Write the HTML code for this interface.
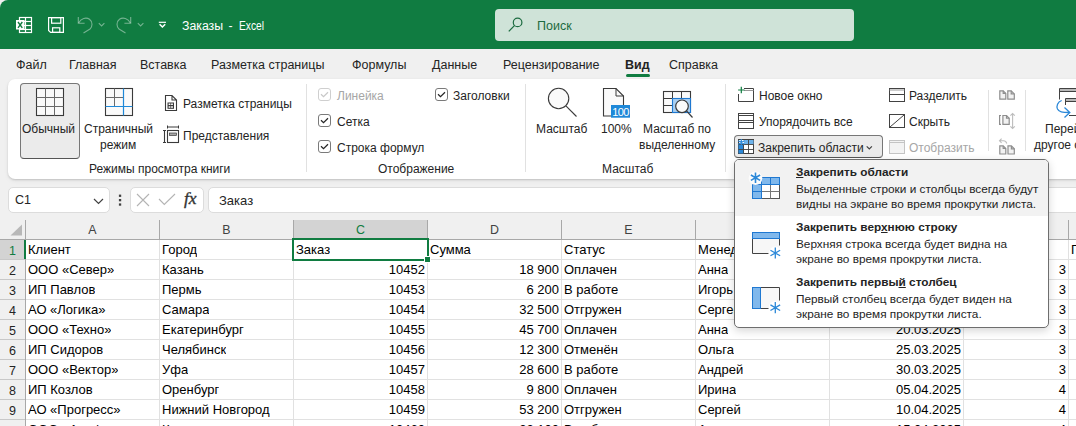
<!DOCTYPE html><html><head><meta charset="utf-8"><style>
*{margin:0;padding:0;box-sizing:border-box}
html,body{width:1076px;height:426px;overflow:hidden;background:#f0f0f0;font-family:"Liberation Sans",sans-serif;color:#242424}
.a{position:absolute;white-space:nowrap}
svg{position:absolute;overflow:visible}
.tab{position:absolute;top:57px;font-size:12.5px;line-height:16px;color:#242424}
.rt{position:absolute;white-space:nowrap;font-size:12px;line-height:15px;color:#242424;margin-top:1px}
.sep{position:absolute;width:1px;background:#e1e1e1}
.cb{position:absolute;width:13px;height:13px;border:1px solid #7a7a7a;border-radius:3px;background:#fff}
.cell{position:absolute;white-space:nowrap;font-size:13px;line-height:19px;padding-top:0.4px;height:19px;color:#000;overflow:hidden}
.num{text-align:right}
.dd{position:absolute;white-space:nowrap;font-size:11.8px;line-height:15px;color:#242424}
</style></head><body>
<div class="a" style="left:0;top:0;width:1076px;height:49px;background:#107c41;border-top-left-radius:8px"></div>
<svg style="left:0;top:0" width="200" height="48">
<rect x="19.5" y="17.5" width="12" height="15" fill="none" stroke="#fff" stroke-width="1.2"/>
<line x1="25.5" y1="17.5" x2="25.5" y2="32.5" stroke="#fff" stroke-width="1.2"/>
<line x1="19.5" y1="21.5" x2="31.5" y2="21.5" stroke="#fff" stroke-width="1.2"/>
<line x1="19.5" y1="25.5" x2="31.5" y2="25.5" stroke="#fff" stroke-width="1.2"/>
<line x1="19.5" y1="29.5" x2="31.5" y2="29.5" stroke="#fff" stroke-width="1.2"/>
<rect x="16" y="20" width="8.5" height="9.5" fill="#fff"/>
<path d="M18 22 L22.3 27.8 M22.3 22 L18 27.8" stroke="#107c41" stroke-width="1.4"/>
<path d="M48.6 17.6 H63.4 V32.4 H50.6 L48.6 30.4 Z" fill="none" stroke="#fff" stroke-width="1.2"/>
<rect x="51.6" y="17.6" width="9.2" height="5.6" fill="none" stroke="#fff" stroke-width="1.2"/>
<rect x="52.6" y="27.8" width="7.2" height="4.6" fill="none" stroke="#fff" stroke-width="1.2"/>
<g stroke="rgba(255,255,255,0.42)" stroke-width="1.1" fill="none">
<path d="M78.3 17 V23.3 H84.6"/>
<path d="M78.6 23 C81 18.5 86 16.8 89.5 19.3 C93 22 92.5 26.5 90 29 L83.5 33"/>
<path d="M98.8 23.2 L101.6 26 L104.4 23.2"/>
<path d="M130.7 17 V23.3 H124.4"/>
<path d="M130.4 23 C128 18.5 123 16.8 119.5 19.3 C116 22 116.5 26.5 119 29 L125.5 33"/>
<path d="M137.8 23.2 L140.6 26 L143.4 23.2"/>
</g>
<line x1="158.8" y1="22.3" x2="166" y2="22.3" stroke="#fff" stroke-width="1.2"/>
<path d="M159.6 24.2 L162.4 27 L165.2 24.2" stroke="#fff" stroke-width="1.5" fill="none"/>
</svg>
<div class="a" style="left:182px;top:18px;font-size:12.3px;line-height:16px;color:#fff">Заказы</div>
<div class="a" style="left:228.5px;top:18px;font-size:12.3px;line-height:16px;color:#fff">-</div>
<div class="a" style="left:239px;top:18px;font-size:12.3px;line-height:16px;color:#fff;transform:scaleX(0.83);transform-origin:0 0">Excel</div>
<div class="a" style="left:495px;top:9px;width:359px;height:32px;background:#cfe3d8;border-radius:4px"></div>
<svg style="left:0;top:0" width="600" height="48">
<circle cx="517.6" cy="22.4" r="4.3" fill="none" stroke="#1c6b40" stroke-width="1.2"/>
<line x1="514.4" y1="25.6" x2="508.8" y2="31.4" stroke="#1c6b40" stroke-width="1.3"/>
</svg>
<div class="a" style="left:537px;top:18px;font-size:12.5px;line-height:16px;color:#1c6b40">Поиск</div>
<div class="tab" style="left:16px">Файл</div>
<div class="tab" style="left:69px">Главная</div>
<div class="tab" style="left:140px">Вставка</div>
<div class="tab" style="left:211px">Разметка страницы</div>
<div class="tab" style="left:352px">Формулы</div>
<div class="tab" style="left:432px">Данные</div>
<div class="tab" style="left:503px">Рецензирование</div>
<div class="tab" style="left:669px">Справка</div>
<div class="tab" style="left:625px;font-weight:bold">Вид</div>
<div class="a" style="left:626px;top:74px;width:24px;height:3px;background:#107c41;border-radius:1.5px"></div>
<div class="a" style="left:8px;top:79px;width:1090px;height:100px;background:#fff;border-radius:7px;box-shadow:0 1px 2px rgba(0,0,0,0.16),0 2px 5px rgba(0,0,0,0.05)"></div>
<div class="a" style="left:20px;top:83px;width:60px;height:76px;background:#ebebeb;border:1px solid #777;border-bottom-color:#555;border-radius:4px"></div>
<svg style="left:0;top:0" width="320" height="180">
<rect x="36.5" y="88.5" width="27" height="27" fill="#fafafa" stroke="#3a3a3a" stroke-width="1.1"/>
<path d="M45.5 88.5 V115.5 M54.5 88.5 V115.5 M36.5 97.5 H63.5 M36.5 106.5 H63.5" stroke="#6a6a6a" stroke-width="1"/>
<rect x="105.5" y="88.5" width="27" height="27" fill="#fafafa" stroke="#3a3a3a" stroke-width="1.1"/>
<path d="M114.5 88.5 V106.5 M105.5 97.5 H123.5" stroke="#6a6a6a" stroke-width="1"/>
<path d="M123.5 88.5 V115.5 M105.5 106.5 H132.5" stroke="#1e88d8" stroke-width="1.2"/>
<path d="M165.5 95.5 H172 L176.5 100 V110.5 H165.5 Z M172 95.5 V100 H176.5" fill="#fff" stroke="#3a3a3a" stroke-width="1.1"/>
<rect x="167.5" y="102.5" width="6.5" height="6.3" fill="#3a3a3a"/>
<path d="M168.6 103.6 H170.4 V105.1 H168.6 Z M171.1 103.6 H172.9 V105.1 H171.1 Z M168.6 106.2 H170.4 V107.7 H168.6 Z M171.1 106.2 H172.9 V107.7 H171.1 Z" fill="#fff"/>
<path d="M164.5 130.5 V142.5 M163 130.5 H166 M163 142.5 H166" stroke="#3a3a3a" stroke-width="1.1"/>
<path d="M167.5 127 H178.5 M167.5 125.5 V128.5 M178.5 125.5 V128.5" stroke="#3a3a3a" stroke-width="1"/>
<rect x="167.5" y="130.5" width="11" height="12" fill="#fff" stroke="#3a3a3a" stroke-width="1.1"/>
<rect x="169.5" y="133" width="7" height="2.5" fill="#a8a8a8" stroke="#3a3a3a" stroke-width="0.7"/>
</svg>
<div class="rt" style="left:22px;top:121px">Обычный</div>
<div class="rt" style="left:84px;top:121px">Страничный</div>
<div class="rt" style="left:100px;top:137px">режим</div>
<div class="rt" style="left:183px;top:96px">Разметка страницы</div>
<div class="rt" style="left:183px;top:128px">Представления</div>
<div class="rt" style="left:89px;top:161px">Режимы просмотра книги</div>
<div class="sep" style="left:306px;top:84px;height:88px"></div>
<div class="cb" style="left:318px;top:88px;border-color:#cfcfcf"></div>
<svg style="left:318px;top:88px" width="13" height="13"><path d="M3 6.3 L5.5 8.6 L10 4.2" fill="none" stroke="#c8c8c8" stroke-width="1.25"/></svg>
<div class="cb" style="left:318px;top:114px;border-color:#7a7a7a"></div>
<svg style="left:318px;top:114px" width="13" height="13"><path d="M3 6.3 L5.5 8.6 L10 4.2" fill="none" stroke="#242424" stroke-width="1.25"/></svg>
<div class="cb" style="left:318px;top:140px;border-color:#7a7a7a"></div>
<svg style="left:318px;top:140px" width="13" height="13"><path d="M3 6.3 L5.5 8.6 L10 4.2" fill="none" stroke="#242424" stroke-width="1.25"/></svg>
<div class="cb" style="left:435px;top:88px;border-color:#7a7a7a"></div>
<svg style="left:435px;top:88px" width="13" height="13"><path d="M3 6.3 L5.5 8.6 L10 4.2" fill="none" stroke="#242424" stroke-width="1.25"/></svg>
<div class="rt" style="left:337px;top:88px;color:#a6a6a6">Линейка</div>
<div class="rt" style="left:337px;top:114px">Сетка</div>
<div class="rt" style="left:337px;top:140px">Строка формул</div>
<div class="rt" style="left:453px;top:88px">Заголовки</div>
<div class="rt" style="left:378px;top:161px">Отображение</div>
<div class="sep" style="left:525px;top:84px;height:88px"></div>
<svg style="left:0;top:0" width="740" height="180">
<circle cx="558.6" cy="98.5" r="10.2" fill="#fafafa" stroke="#3a3a3a" stroke-width="1.1"/>
<line x1="565.9" y1="105.8" x2="576.5" y2="116.5" stroke="#3a3a3a" stroke-width="1.1"/>
<path d="M603.5 88.5 H616 L623.5 96 V116 H603.5 Z" fill="#fafafa" stroke="#3a3a3a" stroke-width="1.1"/>
<path d="M616 88.5 V96 H623.5" fill="none" stroke="#3a3a3a" stroke-width="1"/>
<rect x="611" y="105" width="19" height="12.7" fill="#1e88d8"/>
<text x="620.5" y="115.8" font-family="Liberation Sans" font-size="11" fill="#fff" text-anchor="middle" letter-spacing="-0.7">100</text>
<rect x="663.5" y="91.5" width="27" height="21" fill="#fafafa" stroke="#3a3a3a" stroke-width="1.1"/>
<path d="M672.5 91.5 V112.5 M681.5 91.5 V98.5 M663.5 98.5 H690.5 M663.5 105.5 H672.5" stroke="#3a3a3a" stroke-width="1"/>
<rect x="672.5" y="98.5" width="18" height="14" fill="#a9cff2" stroke="#1e78d1" stroke-width="1.1"/>
<circle cx="682" cy="106.3" r="6.3" fill="#fafafa" stroke="#3a3a3a" stroke-width="1.2"/>
<line x1="686.5" y1="110.8" x2="692.5" y2="117.5" stroke="#3a3a3a" stroke-width="1.2"/>
</svg>
<div class="rt" style="left:536px;top:121px">Масштаб</div>
<div class="rt" style="left:601px;top:121px">100%</div>
<div class="rt" style="left:643px;top:121px">Масштаб по</div>
<div class="rt" style="left:639px;top:137px">выделенному</div>
<div class="rt" style="left:602px;top:161px">Масштаб</div>
<div class="sep" style="left:725px;top:84px;height:88px"></div>
<div class="a" style="left:734px;top:135px;width:149px;height:23px;background:#ebebeb;border:1px solid #777;border-bottom-color:#555;border-radius:4px"></div>
<svg style="left:0;top:0" width="1076" height="180">
<path d="M744 88.5 H753.5 V101.5 H738.5 V94" fill="none" stroke="#424242" stroke-width="1"/>
<path d="M744 90.5 H753.5" stroke="#9a9a9a" stroke-width="1"/>
<path d="M741.3 86.8 V93.2 M738.1 90 H744.5" stroke="#107c41" stroke-width="1.2"/>
<rect x="738.5" y="113.5" width="15" height="15" fill="none" stroke="#424242" stroke-width="1"/>
<path d="M738.5 115.5 H753.5 M738.5 120.5 H753.5 M738.5 122.5 H753.5" stroke="#424242" stroke-width="1"/>
<rect x="738.5" y="139.5" width="15" height="14" fill="#fff" stroke="#424242" stroke-width="1"/>
<rect x="744" y="140" width="9.5" height="4.5" fill="#6cb2eb"/>
<rect x="738.5" y="144.5" width="5.5" height="9" fill="#2b88d8"/>
<path d="M743.5 144.5 V153.5 M748.5 140 V153.5 M738.5 144.5 H753.5 M738.5 149.5 H753.5" stroke="#424242" stroke-width="0.9"/>
<path d="M741.3 139 V146 M738.2 140.8 L744.4 144.2 M738.2 144.2 L744.4 140.8" stroke="#2b88d8" stroke-width="1.2"/>
<path d="M866.7 146.3 L869.3 148.9 L871.9 146.3" fill="none" stroke="#424242" stroke-width="1.2"/>
<rect x="889.5" y="88.5" width="15" height="13" fill="none" stroke="#424242" stroke-width="1"/>
<path d="M889.5 90 H904.5" stroke="#9a9a9a" stroke-width="1"/>
<path d="M889.5 94.5 H904.5" stroke="#424242" stroke-width="1"/>
<rect x="889.5" y="114.5" width="15" height="13" fill="none" stroke="#424242" stroke-width="1"/>
<path d="M890 127 L904 115" stroke="#424242" stroke-width="1"/>
<rect x="889.5" y="140.5" width="15" height="13" fill="#f3f3f3" stroke="#c4c4c4" stroke-width="1"/>
<path d="M889.5 142.5 H904.5" stroke="#c4c4c4" stroke-width="1"/>
<g stroke="#8e8e8e" stroke-width="1.2" fill="#f2f2f2" stroke-linejoin="miter">
<path d="M999.8 90.8 H1003.2 L1005.8 93.4 V99.2 H999.8 Z M1007.8 90.8 H1011.2 L1014.3 93.9 V99.2 H1007.8 Z"/>
<path d="M1003.2 90.8 V93.4 H1005.8 M1011.2 90.8 V93.9 H1014.3" fill="none"/>
<path d="M1002.9 115.5 H1006.5 L1009.2 118.2 V124.3 H1002.9 Z"/>
<path d="M1006.5 115.5 V118.2 H1009.2 M1001 115.5 H999.6 V124.3 H1001" fill="none"/>
<path d="M999.8 145.9 H1003.2 L1005.8 148.5 V154 H999.8 Z M1008 145.9 H1011.4 L1014.3 148.8 V154 H1008 Z"/>
<path d="M1003.2 145.9 V148.5 H1005.8 M1011.4 145.9 V148.8 H1014.3" fill="none"/>
</g>
<g stroke="#bdbdbd" stroke-width="1.1" fill="none">
<path d="M1012.6 113.5 V128.5 M1010.4 115.7 L1012.6 113.5 L1014.8 115.7 M1010.4 126.3 L1012.6 128.5 L1014.8 126.3"/>
<path d="M999.5 140.8 H1003.5 C1005 140.8 1006.3 141.8 1006.8 143.5 M1001.6 138.7 L999.5 140.8 L1001.6 142.9"/>
</g>
<path d="M1059.5 99.5 V88.5 H1080" fill="none" stroke="#424242" stroke-width="1"/>
<rect x="1060" y="89" width="20" height="2.5" fill="#b8b8b8"/>
<path d="M1059.5 91.5 H1080" stroke="#424242" stroke-width="1"/>
<path d="M1065.5 105 V98.5 H1080" fill="none" stroke="#424242" stroke-width="1"/>
<rect x="1066" y="99" width="14" height="2.5" fill="#b8b8b8"/>
<path d="M1065.5 101.5 H1080 M1069 115.5 H1080" stroke="#424242" stroke-width="1"/>
<path d="M1061.7 100.5 C1057.5 102 1056.2 106 1057.5 109 C1059 112 1062 112.5 1069.5 112.5 M1064.5 107.5 L1069.8 112.5 L1064.5 117.5" fill="none" stroke="#2b88d8" stroke-width="1.3"/>
</svg>
<div class="rt" style="left:759px;top:88px">Новое окно</div>
<div class="rt" style="left:759px;top:114px">Упорядочить все</div>
<div class="rt" style="left:758px;top:140px">Закрепить области</div>
<div class="rt" style="left:909px;top:88px">Разделить</div>
<div class="rt" style="left:909px;top:114px">Скрыть</div>
<div class="rt" style="left:909px;top:140px;color:#a6a6a6">Отобразить</div>
<div class="sep" style="left:988px;top:90px;height:61px"></div>
<div class="sep" style="left:1025px;top:90px;height:61px"></div>
<div class="rt" style="left:1045px;top:121px">Перейти в</div>
<div class="rt" style="left:1034px;top:137px">другое окно</div>
<div class="a" style="left:8px;top:187px;width:102px;height:26px;background:#fff;border:1px solid #dcdcdc;border-radius:5px"></div>
<div class="a" style="left:15px;top:193px;font-size:12.5px;line-height:15px;color:#242424">C1</div>
<svg style="left:0;top:0" width="220" height="220">
<path d="M94 199 L98.5 203.5 L103 199" fill="none" stroke="#424242" stroke-width="1.2"/>
<rect x="118.9" y="194.6" width="2.3" height="2.3" fill="#424242"/><rect x="118.9" y="199" width="2.3" height="2.3" fill="#424242"/><rect x="118.9" y="203.4" width="2.3" height="2.3" fill="#424242"/>
</svg>
<div class="a" style="left:130px;top:187px;width:74px;height:26px;background:#fff;border:1px solid #dcdcdc;border-radius:5px"></div>
<svg style="left:0;top:0" width="220" height="220"><path d="M137 194 L149 206 M149 194 L137 206" stroke="#b4b4b4" stroke-width="1.1"/><path d="M159 199 L164.3 204.4 L175 194" fill="none" stroke="#b4b4b4" stroke-width="1.1"/></svg>
<div class="a" style="left:184px;top:188px;font-family:'Liberation Serif',serif;font-style:italic;font-size:17.5px;line-height:20px;color:#333;-webkit-text-stroke:0.35px #333">fx</div>
<div class="a" style="left:208px;top:187px;width:900px;height:26px;background:#fff;border:1px solid #dcdcdc;border-radius:5px"></div>
<div class="a" style="left:219px;top:193px;font-size:13px;line-height:15px;color:#242424">Заказ</div>
<div class="a" style="left:26px;top:240px;width:1050px;height:186px;background:#fff"></div>
<div class="a" style="left:293px;top:220px;width:135px;height:19px;background:#d3d3d3"></div>
<div class="a" style="left:0;top:240px;width:24px;height:19px;background:#d3d3d3"></div>
<div class="a" style="left:24px;top:240px;width:2px;height:19px;background:#107c41"></div>
<svg style="left:0;top:0" width="1076" height="426"><line x1="159.5" y1="240" x2="159.5" y2="426" stroke="#e1e1e1" stroke-width="1"/><line x1="159.5" y1="220" x2="159.5" y2="239" stroke="#a8a8a8" stroke-width="1"/><line x1="293.5" y1="240" x2="293.5" y2="426" stroke="#e1e1e1" stroke-width="1"/><line x1="293.5" y1="220" x2="293.5" y2="239" stroke="#a8a8a8" stroke-width="1"/><line x1="427.5" y1="240" x2="427.5" y2="426" stroke="#e1e1e1" stroke-width="1"/><line x1="427.5" y1="220" x2="427.5" y2="239" stroke="#a8a8a8" stroke-width="1"/><line x1="561.5" y1="240" x2="561.5" y2="426" stroke="#e1e1e1" stroke-width="1"/><line x1="561.5" y1="220" x2="561.5" y2="239" stroke="#a8a8a8" stroke-width="1"/><line x1="695.5" y1="240" x2="695.5" y2="426" stroke="#e1e1e1" stroke-width="1"/><line x1="695.5" y1="220" x2="695.5" y2="239" stroke="#a8a8a8" stroke-width="1"/><line x1="829.5" y1="240" x2="829.5" y2="426" stroke="#e1e1e1" stroke-width="1"/><line x1="829.5" y1="220" x2="829.5" y2="239" stroke="#a8a8a8" stroke-width="1"/><line x1="963.5" y1="240" x2="963.5" y2="426" stroke="#e1e1e1" stroke-width="1"/><line x1="963.5" y1="220" x2="963.5" y2="239" stroke="#a8a8a8" stroke-width="1"/><line x1="1068.5" y1="240" x2="1068.5" y2="426" stroke="#e1e1e1" stroke-width="1"/><line x1="1068.5" y1="220" x2="1068.5" y2="239" stroke="#a8a8a8" stroke-width="1"/><line x1="26" y1="259.5" x2="1076" y2="259.5" stroke="#e1e1e1" stroke-width="1"/><line x1="0" y1="259.5" x2="25" y2="259.5" stroke="#c8c8c8" stroke-width="1"/><line x1="26" y1="279.5" x2="1076" y2="279.5" stroke="#e1e1e1" stroke-width="1"/><line x1="0" y1="279.5" x2="25" y2="279.5" stroke="#c8c8c8" stroke-width="1"/><line x1="26" y1="299.5" x2="1076" y2="299.5" stroke="#e1e1e1" stroke-width="1"/><line x1="0" y1="299.5" x2="25" y2="299.5" stroke="#c8c8c8" stroke-width="1"/><line x1="26" y1="319.5" x2="1076" y2="319.5" stroke="#e1e1e1" stroke-width="1"/><line x1="0" y1="319.5" x2="25" y2="319.5" stroke="#c8c8c8" stroke-width="1"/><line x1="26" y1="339.5" x2="1076" y2="339.5" stroke="#e1e1e1" stroke-width="1"/><line x1="0" y1="339.5" x2="25" y2="339.5" stroke="#c8c8c8" stroke-width="1"/><line x1="26" y1="359.5" x2="1076" y2="359.5" stroke="#e1e1e1" stroke-width="1"/><line x1="0" y1="359.5" x2="25" y2="359.5" stroke="#c8c8c8" stroke-width="1"/><line x1="26" y1="379.5" x2="1076" y2="379.5" stroke="#e1e1e1" stroke-width="1"/><line x1="0" y1="379.5" x2="25" y2="379.5" stroke="#c8c8c8" stroke-width="1"/><line x1="26" y1="399.5" x2="1076" y2="399.5" stroke="#e1e1e1" stroke-width="1"/><line x1="0" y1="399.5" x2="25" y2="399.5" stroke="#c8c8c8" stroke-width="1"/><line x1="26" y1="419.5" x2="1076" y2="419.5" stroke="#e1e1e1" stroke-width="1"/><line x1="0" y1="419.5" x2="25" y2="419.5" stroke="#c8c8c8" stroke-width="1"/><line x1="25.5" y1="220" x2="25.5" y2="426" stroke="#a8a8a8" stroke-width="1"/><line x1="0" y1="239.5" x2="1076" y2="239.5" stroke="#a8a8a8" stroke-width="1"/><path d="M10.5 235.5 L22 235.5 L22 224.5 Z" fill="#b8b8b8"/></svg>
<div class="a" style="left:24px;top:240px;width:2px;height:19px;background:#107c41"></div>
<div class="a" style="left:26px;top:222.6px;width:133px;text-align:center;font-size:12.4px;line-height:15px;color:#424242">A</div>
<div class="a" style="left:160px;top:222.6px;width:133px;text-align:center;font-size:12.4px;line-height:15px;color:#424242">B</div>
<div class="a" style="left:294px;top:222.6px;width:133px;text-align:center;font-size:12.4px;line-height:15px;color:#107c41">C</div>
<div class="a" style="left:428px;top:222.6px;width:133px;text-align:center;font-size:12.4px;line-height:15px;color:#424242">D</div>
<div class="a" style="left:562px;top:222.6px;width:133px;text-align:center;font-size:12.4px;line-height:15px;color:#424242">E</div>
<div class="a" style="left:696px;top:222.6px;width:133px;text-align:center;font-size:12.4px;line-height:15px;color:#424242">F</div>
<div class="a" style="left:830px;top:222.6px;width:133px;text-align:center;font-size:12.4px;line-height:15px;color:#424242">G</div>
<div class="a" style="left:964px;top:222.6px;width:104px;text-align:center;font-size:12.4px;line-height:15px;color:#424242">H</div>
<div class="a" style="left:0;top:241px;width:25px;text-align:center;font-size:12.5px;line-height:20px;color:#107c41">1</div>
<div class="cell" style="left:28px;top:240px">Клиент</div>
<div class="cell" style="left:162px;top:240px">Город</div>
<div class="cell" style="left:296px;top:240px">Заказ</div>
<div class="cell" style="left:430px;top:240px">Сумма</div>
<div class="cell" style="left:564px;top:240px">Статус</div>
<div class="cell" style="left:698px;top:240px">Менеджер</div>
<div class="cell" style="left:832px;top:240px">Дата</div>
<div class="a" style="left:0;top:261px;width:25px;text-align:center;font-size:12.5px;line-height:20px;color:#242424">2</div>
<div class="cell" style="left:28px;top:260px">ООО «Север»</div>
<div class="cell" style="left:162px;top:260px">Казань</div>
<div class="cell num" style="left:293px;top:260px;width:132px">10452</div>
<div class="cell num" style="left:427px;top:260px;width:132px">18 900</div>
<div class="cell" style="left:564px;top:260px">Оплачен</div>
<div class="cell" style="left:698px;top:260px">Анна</div>
<div class="cell num" style="left:829px;top:260px;width:132px">01.03.2025</div>
<div class="cell num" style="left:963px;top:260px;width:103px">3</div>
<div class="a" style="left:0;top:281px;width:25px;text-align:center;font-size:12.5px;line-height:20px;color:#242424">3</div>
<div class="cell" style="left:28px;top:280px">ИП Павлов</div>
<div class="cell" style="left:162px;top:280px">Пермь</div>
<div class="cell num" style="left:293px;top:280px;width:132px">10453</div>
<div class="cell num" style="left:427px;top:280px;width:132px">6 200</div>
<div class="cell" style="left:564px;top:280px">В работе</div>
<div class="cell" style="left:698px;top:280px">Игорь</div>
<div class="cell num" style="left:829px;top:280px;width:132px">05.03.2025</div>
<div class="cell num" style="left:963px;top:280px;width:103px">3</div>
<div class="a" style="left:0;top:301px;width:25px;text-align:center;font-size:12.5px;line-height:20px;color:#242424">4</div>
<div class="cell" style="left:28px;top:300px">АО «Логика»</div>
<div class="cell" style="left:162px;top:300px">Самара</div>
<div class="cell num" style="left:293px;top:300px;width:132px">10454</div>
<div class="cell num" style="left:427px;top:300px;width:132px">32 500</div>
<div class="cell" style="left:564px;top:300px">Отгружен</div>
<div class="cell" style="left:698px;top:300px">Сергей</div>
<div class="cell num" style="left:829px;top:300px;width:132px">10.03.2025</div>
<div class="cell num" style="left:963px;top:300px;width:103px">3</div>
<div class="a" style="left:0;top:321px;width:25px;text-align:center;font-size:12.5px;line-height:20px;color:#242424">5</div>
<div class="cell" style="left:28px;top:320px">ООО «Техно»</div>
<div class="cell" style="left:162px;top:320px">Екатеринбург</div>
<div class="cell num" style="left:293px;top:320px;width:132px">10455</div>
<div class="cell num" style="left:427px;top:320px;width:132px">45 700</div>
<div class="cell" style="left:564px;top:320px">Оплачен</div>
<div class="cell" style="left:698px;top:320px">Анна</div>
<div class="cell num" style="left:829px;top:320px;width:132px">20.03.2025</div>
<div class="cell num" style="left:963px;top:320px;width:103px">3</div>
<div class="a" style="left:0;top:341px;width:25px;text-align:center;font-size:12.5px;line-height:20px;color:#242424">6</div>
<div class="cell" style="left:28px;top:340px">ИП Сидоров</div>
<div class="cell" style="left:162px;top:340px">Челябинск</div>
<div class="cell num" style="left:293px;top:340px;width:132px">10456</div>
<div class="cell num" style="left:427px;top:340px;width:132px">12 300</div>
<div class="cell" style="left:564px;top:340px">Отменён</div>
<div class="cell" style="left:698px;top:340px">Ольга</div>
<div class="cell num" style="left:829px;top:340px;width:132px">25.03.2025</div>
<div class="cell num" style="left:963px;top:340px;width:103px">3</div>
<div class="a" style="left:0;top:361px;width:25px;text-align:center;font-size:12.5px;line-height:20px;color:#242424">7</div>
<div class="cell" style="left:28px;top:360px">ООО «Вектор»</div>
<div class="cell" style="left:162px;top:360px">Уфа</div>
<div class="cell num" style="left:293px;top:360px;width:132px">10457</div>
<div class="cell num" style="left:427px;top:360px;width:132px">28 600</div>
<div class="cell" style="left:564px;top:360px">В работе</div>
<div class="cell" style="left:698px;top:360px">Андрей</div>
<div class="cell num" style="left:829px;top:360px;width:132px">30.03.2025</div>
<div class="cell num" style="left:963px;top:360px;width:103px">3</div>
<div class="a" style="left:0;top:381px;width:25px;text-align:center;font-size:12.5px;line-height:20px;color:#242424">8</div>
<div class="cell" style="left:28px;top:380px">ИП Козлов</div>
<div class="cell" style="left:162px;top:380px">Оренбург</div>
<div class="cell num" style="left:293px;top:380px;width:132px">10458</div>
<div class="cell num" style="left:427px;top:380px;width:132px">9 800</div>
<div class="cell" style="left:564px;top:380px">Оплачен</div>
<div class="cell" style="left:698px;top:380px">Ирина</div>
<div class="cell num" style="left:829px;top:380px;width:132px">05.04.2025</div>
<div class="cell num" style="left:963px;top:380px;width:103px">4</div>
<div class="a" style="left:0;top:401px;width:25px;text-align:center;font-size:12.5px;line-height:20px;color:#242424">9</div>
<div class="cell" style="left:28px;top:400px">АО «Прогресс»</div>
<div class="cell" style="left:162px;top:400px">Нижний Новгород</div>
<div class="cell num" style="left:293px;top:400px;width:132px">10459</div>
<div class="cell num" style="left:427px;top:400px;width:132px">53 200</div>
<div class="cell" style="left:564px;top:400px">Отгружен</div>
<div class="cell" style="left:698px;top:400px">Сергей</div>
<div class="cell num" style="left:829px;top:400px;width:132px">10.04.2025</div>
<div class="cell num" style="left:963px;top:400px;width:103px">4</div>
<div class="a" style="left:0;top:421px;width:25px;text-align:center;font-size:12.5px;line-height:20px;color:#242424">10</div>
<div class="cell" style="left:28px;top:420px">ООО «Альфа»</div>
<div class="cell" style="left:162px;top:420px">Казань</div>
<div class="cell num" style="left:293px;top:420px;width:132px">10460</div>
<div class="cell num" style="left:427px;top:420px;width:132px">22 100</div>
<div class="cell" style="left:564px;top:420px">В работе</div>
<div class="cell" style="left:698px;top:420px">Анна</div>
<div class="cell num" style="left:829px;top:420px;width:132px">15.04.2025</div>
<div class="cell num" style="left:963px;top:420px;width:103px">4</div>
<div class="cell" style="left:1071px;top:240px">П</div>
<div class="a" style="left:292px;top:238px;width:137px;height:23px;border:2px solid #107c41"></div>
<div class="a" style="left:424px;top:256px;width:7px;height:7px;background:#107c41;border:1px solid #fff"></div>
<div class="a" style="left:734px;top:159px;width:315px;height:169px;background:#fff;border:1px solid #6e6e6e;border-radius:5px;box-shadow:0 3px 8px rgba(0,0,0,0.16)"></div>
<div class="a" style="left:735px;top:160px;width:313px;height:56px;background:#f2f2f2;border-radius:4px 4px 0 0"></div>
<svg style="left:0;top:0" width="1076" height="426">
<g>
<rect x="761.5" y="184.5" width="18" height="14" fill="#fff" stroke="#555" stroke-width="1"/>
<path d="M770.5 184.5 V198.5 M761.5 191.5 H779.5" stroke="#777" stroke-width="1"/>
<rect x="761.5" y="177.5" width="18" height="7" fill="#80b8ec" stroke="#1f78d1" stroke-width="1"/>
<path d="M770.5 177.5 V184.5" stroke="#1f78d1" stroke-width="1"/>
<rect x="752.5" y="184.5" width="9" height="14" fill="#80b8ec" stroke="#1f78d1" stroke-width="1"/>
<path d="M752.5 191.5 H761.5" stroke="#1f78d1" stroke-width="1"/>
<circle cx="755.5" cy="178.2" r="6.8" fill="#fcfcfc"/>
<path d="M755.50 172.40 L755.50 183.00 M750.91 175.05 L760.09 180.35 M750.91 180.35 L760.09 175.05" stroke="#2b88d8" stroke-width="1.6" fill="none"/>
</g>
<g>
<rect x="752.5" y="232.5" width="27" height="21" fill="#f7f7f7" stroke="none"/>
<path d="M779.5 232.5 V245.5 M752.5 232.5 V253.5 H768.5" fill="none" stroke="#424242" stroke-width="1"/>
<rect x="752.5" y="232.5" width="27" height="6" fill="#80b8ec" stroke="#1f78d1" stroke-width="1"/>
<circle cx="775.3" cy="253" r="6.5" fill="#fff"/>
<path d="M775.30 247.40 L775.30 258.60 M770.45 250.20 L780.15 255.80 M770.45 255.80 L780.15 250.20" stroke="#2b88d8" stroke-width="1.3" fill="none"/>
</g>
<g>
<rect x="752.5" y="287.5" width="27" height="21" fill="#f7f7f7" stroke="none"/>
<path d="M760.5 287.5 H779.5 V300.5 M760.5 308.5 H768.5" fill="none" stroke="#424242" stroke-width="1"/>
<rect x="752.5" y="287.5" width="8" height="21" fill="#80b8ec" stroke="#1f78d1" stroke-width="1"/>
<circle cx="775.3" cy="307.7" r="6.5" fill="#fff"/>
<path d="M775.30 302.10 L775.30 313.30 M770.45 304.90 L780.15 310.50 M770.45 310.50 L780.15 304.90" stroke="#2b88d8" stroke-width="1.3" fill="none"/>
</g>
</svg>
<div class="dd" style="left:796px;top:165px;font-weight:bold"><u>З</u>акрепить области</div>
<div class="dd" style="left:796px;top:182px">Выделенные строки и столбцы всегда будут</div>
<div class="dd" style="left:796px;top:197px">видны на экране во время прокрутки листа.</div>
<div class="dd" style="left:796px;top:220px;font-weight:bold">Закрепить вер<u>х</u>нюю строку</div>
<div class="dd" style="left:796px;top:237px">Верхняя строка всегда будет видна на</div>
<div class="dd" style="left:796px;top:252px">экране во время прокрутки листа.</div>
<div class="dd" style="left:796px;top:275px;font-weight:bold">Закрепить первы<u>й</u> столбец</div>
<div class="dd" style="left:796px;top:292px">Первый столбец всегда будет виден на</div>
<div class="dd" style="left:796px;top:307px">экране во время прокрутки листа.</div>
</body></html>
